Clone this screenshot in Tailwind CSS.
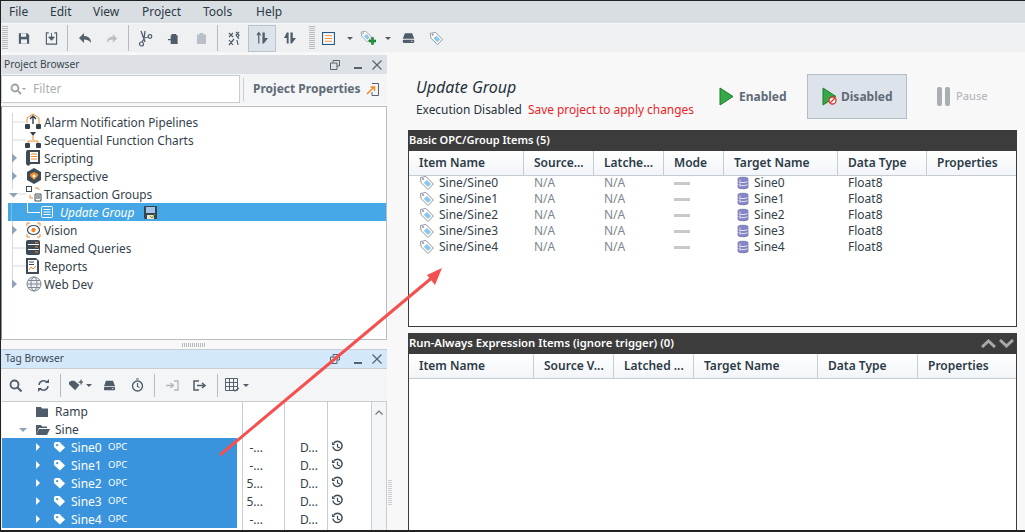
<!DOCTYPE html>
<html lang="en">
<head>
<meta charset="UTF-8">
<title>Update Group</title>
<script src="https://cdn.jsdelivr.net/npm/@tailwindcss/browser@4"></script>
</head>
<body class="font-['Noto_Sans',sans-serif] text-[12px] text-[#2c3a47] bg-[#f8f8f8] overflow-hidden">
<svg width="0" height="0" class="absolute">
  <symbol id="tagblue" viewBox="0 0 16 16"><path d="M1.5 2.5 7 1.5l7.5 7.5-5.5 5.5L2 7.5z" fill="#fff" stroke="#8b959e"/><path d="M6 6.5 8 5l4 4-3 3-4-4z" fill="#8cc6ea"/><circle cx="4" cy="4" r="1" fill="#8b959e"/></symbol>
  <symbol id="db" viewBox="0 0 12 14"><path d="M1 2.5C1 .8 11 .8 11 2.500V11.500C11 13.200 1 13.200 1 11.500z" fill="#8486c6"/><path d="M1 5.500c2 1.400 8 1.400 10 0M1 8.500c2 1.400 8 1.400 10 0" stroke="#e2e3f3" fill="none"/><path d="M3 3v8" stroke="#c5c6e6"/><path d="M1 2.500C1 .8 11 .8 11 2.500V11.500C11 13.200 1 13.200 1 11.500z" fill="none" stroke="#5c5e9c" stroke-width=".6"/></symbol>
  <symbol id="tagw" viewBox="0 0 14 14"><path d="M1 2.500 2.500 1H7l6 6-5.500 5.500-6.500-6z" fill="#fff"/><circle cx="4.500" cy="4.500" r="1.200" fill="#3a94dd"/></symbol>
  <symbol id="hist" viewBox="0 0 14 14"><path d="M3 3.200A5 5 0 1 1 2 7" fill="none" stroke="#3d4a57" stroke-width="1.500"/><path d="M1 2v3.500h3.500z" fill="#3d4a57"/><path d="M7 4v3.500l2.500 1" fill="none" stroke="#3d4a57" stroke-width="1.300"/></symbol>
  <symbol id="drive" viewBox="0 0 16 14"><path d="M3.500 1h9l2.500 7H1z" fill="#4f5d6b"/><rect x="1" y="9" width="14" height="4" rx="1" fill="#4f5d6b"/><rect x="11" y="10.500" width="2" height="1" fill="#fff"/></symbol>
</svg>

<div class="h-[532px] w-[1025px] flex flex-col border-t border-l border-[#222]">
  <!-- menu -->
  <div class="h-[22px] mb-[1px] shrink-0 bg-[#d9dee2] flex items-center text-[12px] text-[#2c3a47]">
    <span class="ml-2 w-[41px]">File</span><span class="w-[43px]">Edit</span><span class="w-[49px]">View</span><span class="w-[61px]">Project</span><span class="w-[53px]">Tools</span><span>Help</span>
  </div>
  <!-- toolbar -->
  <div class="h-[28px] shrink-0 bg-[#eef0f2] flex items-center">
    <div class="w-[6px] h-[24px] ml-[1px] mr-[9px] bg-[repeating-linear-gradient(to_bottom,#b5bbc1_0,#b5bbc1_1px,transparent_1px,transparent_2px)]"></div>
    <svg class="w-[12px] h-[13px] ml-[1px] mr-[15px]" viewBox="0 0 14 14"><path d="M1 1h10l2 2v10H1z" fill="#4f5d6b"/><rect x="3.500" y="1" width="6" height="4" fill="#eef0f2"/><rect x="3.500" y="8" width="7" height="5" fill="#eef0f2"/></svg>
    <svg class="w-[13px] h-[13px] mr-[9px]" viewBox="0 0 14 14"><path d="M4 1H1.500v12h11V1H10" fill="none" stroke="#4f5d6b" stroke-width="1.200"/><path d="M7 1v6M4 5.500h6L7 9z" fill="#4f5d6b" stroke="#4f5d6b"/></svg>
    <div class="w-px h-[26px] bg-[#b5bbc1] mr-[10px]"></div>
    <svg class="w-[14px] h-[12px] mr-[14px]" viewBox="0 0 14 12"><path d="M6 1v3c4 0 7 2 7 7-2-3-4-3.500-7-3.500V11L1 6z" fill="#54616e"/></svg>
    <svg class="w-[12px] h-[11px] mr-[10px]" viewBox="0 0 14 12"><path d="M8 1v3C4 4 1 6 1 11c2-3 4-3.500 7-3.500V11l5-5z" fill="#b9c0c7"/></svg>
    <div class="w-px h-[26px] bg-[#b5bbc1] mr-[8px]"></div>
    <svg class="w-[16px] h-[17px] mr-[14px]" viewBox="0 0 16 17"><path d="M4 1l3 8 1 3M8 1 7 9l-2 3" stroke="#4f5d6b" fill="none" stroke-width="1.300"/><circle cx="4.500" cy="14" r="2" fill="none" stroke="#4f5d6b" stroke-width="1.200"/><circle cx="13" cy="6.500" r="1.800" fill="none" stroke="#4f5d6b" stroke-width="1.200"/><path d="M8 8l3-1" stroke="#4f5d6b"/></svg>
    <svg class="w-[12px] h-[13px] mr-[18px]" viewBox="0 0 13 13"><path d="M5 1.500h5V3h1.500v9.500H4v-4H1V7h3V3h1z" fill="#4f5d6b"/></svg>
    <svg class="w-[9px] h-[11px] mr-[11px]" viewBox="0 0 10 12"><path d="M3 0h4v1.500h3V12H0V1.500h3z" fill="#b9c0c7"/></svg>
    <div class="w-px h-[26px] bg-[#b5bbc1] mr-[9px]"></div>
    <svg class="w-[14px] h-[15px] mr-[7px]" viewBox="0 0 14 15"><path d="M2 2l4 4M6 2 2 6M9 1l3 3-1 2M12 1 9 4l3 4M2 9l4 5M7 8l-5 6M10 9l1 5" stroke="#4f5d6b" fill="none" stroke-width="1.200"/></svg>
    <div class="w-[28px] h-[27px] bg-[#dce3ea] border border-[#b9c3cc] flex items-center justify-center mr-[8px]">
      <svg class="w-[12px] h-[14px]" viewBox="0 0 13 14"><path d="M3 1v12M1 4l2-3 2 3" stroke="#4f5d6b" fill="none" stroke-width="1.300"/><path d="M7 1h2.500v6H13L8.500 13H7z" fill="#4f5d6b"/></svg>
    </div>
    <svg class="w-[12px] h-[14px] mr-[13px]" viewBox="0 0 13 14"><path d="M0 7 3 1h2v12H3V7zM7 1h2.500v6H13L8.500 13H7z" fill="#4f5d6b"/></svg>
    <div class="w-[6px] h-[24px] mr-[7px] bg-[repeating-linear-gradient(to_bottom,#b5bbc1_0,#b5bbc1_1px,transparent_1px,transparent_2px)]"></div>
    <svg class="w-[13px] h-[13px] mr-[12px]" viewBox="0 0 14 14"><rect x=".6" y=".6" width="12.800" height="12.800" fill="#fff" stroke="#1f5e8c" stroke-width="1.200"/><path d="M3 4h8M3 7h8M3 10h8" stroke="#e9872d"/></svg>
    <div class="w-0 h-0 border-x-[3px] border-x-transparent border-t-[3px] border-t-[#4f5d6b] mr-[7px]"></div>
    <svg class="w-[16px] h-[16px] mr-[9px]" viewBox="0 0 16 16"><use href="#tagblue" width="13" height="13"/><path d="M9 10h2.500V7.500h2V10H16v2h-2.500v2.500h-2V12H9z" fill="#1e9e3a" stroke="#0b5d1d" stroke-width=".5"/></svg>
    <div class="w-0 h-0 border-x-[3px] border-x-transparent border-t-[3px] border-t-[#4f5d6b] mr-[11px]"></div>
    <svg class="w-[13px] h-[12px] mr-[14px]" viewBox="0 0 16 14"><use href="#drive"/></svg>
    <svg class="w-[15px] h-[15px]" viewBox="0 0 16 16"><use href="#tagblue"/></svg>
  </div>

  <div class="flex-1 min-h-0 flex">
    <!-- left column -->
    <div class="w-[386px] shrink-0 flex flex-col pt-[3px]">
      <div class="h-[19px] shrink-0 bg-[#dde1e5] flex items-center px-[3px] text-[10.200px] text-[#3a4651]">
        <span class="flex-1">Project Browser</span>
        <svg class="w-[10px] h-[10px] mr-[14px]" viewBox="0 0 10 10"><path d="M3 2.500V.5h6.500V6H7M.5 3h6.500v6.500H.5z" fill="none" stroke="#56636f"/></svg>
        <div class="w-[8px] h-[2px] bg-[#56636f] mt-[7px] mr-[10px]"></div>
        <svg class="w-[10px] h-[10px] mr-[2px]" viewBox="0 0 10 10"><path d="M.5.5l9 9M9.500.5l-9 9" stroke="#56636f" stroke-width="1.200"/></svg>
      </div>
      <div class="h-[30px] shrink-0 bg-[#f4f5f6] flex items-center">
        <div class="w-[239px] h-[28px] bg-white border border-[#c8cdd2] flex items-center px-[8px] text-[#a9aeb3]">
          <svg class="w-[16px] h-[12px] mr-[7px]" viewBox="0 0 16 12"><circle cx="5" cy="5" r="3.500" fill="none" stroke="#9aa0a6" stroke-width="1.800"/><path d="M8 8l3 3" stroke="#9aa0a6" stroke-width="1.800"/><path d="M12 5h4l-2 2z" fill="#9aa0a6"/></svg>
          Filter
        </div>
        <div class="w-px h-[23px] bg-[#c8cdd2] ml-[3px]"></div>
        <span class="ml-[9px] font-bold text-[#5f6b76]">Project Properties</span>
        <svg class="w-[13px] h-[13px] ml-[5px]" viewBox="0 0 13 13"><path d="M6 .5h6.500v12H6V9" fill="none" stroke="#56636f"/><path d="M1 11l7-7M4.500 4H8.500V8" stroke="#ee8a2b" fill="none" stroke-width="1.500"/></svg>
      </div>
      <!-- project tree -->
      <div class="h-[234px] shrink-0 mt-[2px] bg-white border border-[#b9bec3] border-l-[#8a8f94] pt-[6px] text-[11.850px] leading-[18px] text-[#333f4a]">
        <div class="flex h-[18px]"><svg class="w-[42px] h-[18px] shrink-0" viewBox="0 0 42 18"><path d="M10.500 0v18M10.500 9H24" stroke="#d5d8db"/><path d="M25 10V5l6-4 6 4v6" fill="#fff" stroke="#ee8a2b"/><path d="M31 11V4M28 6l3-3 3 3" stroke="#333f4a" fill="none" stroke-width="1.400"/><rect x="23" y="11" width="5" height="5" rx="1" fill="#333f4a"/><rect x="34" y="11" width="5" height="5" rx="1" fill="#333f4a"/></svg><span>Alarm Notification Pipelines</span></div>
        <div class="flex h-[18px]"><svg class="w-[42px] h-[18px] shrink-0" viewBox="0 0 42 18"><path d="M10.500 0v18M10.500 9H24" stroke="#d5d8db"/><path d="M28 1h6l-3 4z" fill="#333f4a"/><path d="M31 5v4M26 13v-3h10v3" stroke="#ee8a2b" fill="none"/><rect x="23" y="12" width="5" height="5" rx="1" fill="#333f4a"/><rect x="34" y="12" width="5" height="5" rx="1" fill="#333f4a"/></svg><span>Sequential Function Charts</span></div>
        <div class="flex h-[18px]"><svg class="w-[42px] h-[18px] shrink-0" viewBox="0 0 42 18"><path d="M10.500 0v18" stroke="#d5d8db"/><path d="M10 4.500l5 4.500-5 4.500z" fill="#8ea3b8"/><path d="M25 1h13v14h-9l-3 2-2-2V3z" fill="#3d4a57"/><path d="M28 3h8v10h-8z" fill="#fff"/><path d="M29 5h6M29 7.500h6M29 10h6" stroke="#ee8a2b"/></svg><span>Scripting</span></div>
        <div class="flex h-[18px]"><svg class="w-[42px] h-[18px] shrink-0" viewBox="0 0 42 18"><path d="M10.500 0v18" stroke="#d5d8db"/><path d="M10 4.500l5 4.500-5 4.500z" fill="#8ea3b8"/><path d="M32 1l7 4v8l-7 4-7-4V5z" fill="#3d4a57"/><path d="M28 7l4-2 4 2v2l-4 4-4-4z" fill="#ee8a2b"/><circle cx="32" cy="9" r="1.500" fill="#fff"/></svg><span>Perspective</span></div>
        <div class="flex h-[18px]"><svg class="w-[42px] h-[18px] shrink-0" viewBox="0 0 42 18"><path d="M10.500 0v5" stroke="#d5d8db"/><path d="M7 8h9l-4.500 4.500z" fill="#8ea3b8"/><path d="M16 9h8" stroke="#d5d8db"/><rect x="24.500" y="1.500" width="5" height="5" fill="#fff" stroke="#3d4a57"/><path d="M33 3h3l1 2M28 10v3h3" stroke="#ee8a2b" fill="none"/><path d="M33 9h6v7h-6z" fill="#fff" stroke="#3d4a57"/><path d="M34 11h4M34 13h4" stroke="#3d4a57"/></svg><span>Transaction Groups</span></div>
        <div class="flex h-[18px] ml-[6px] bg-[#45a7e6] text-white italic"><svg class="w-[52px] h-[18px] shrink-0" viewBox="0 0 52 18"><path d="M19.500 0v9.500H32" stroke="#fff" fill="none"/><path d="M3.500 0v18" stroke="#d5d8db" opacity=".4"/><rect x="33.500" y="3.500" width="11" height="11" rx="1" fill="none" stroke="#fff"/><path d="M35.500 6.500h7M35.500 9h7M35.500 11.500h7" stroke="#fff"/></svg><span class="w-[84px]">Update Group</span><svg class="w-[13px] h-[13px] mt-[3px]" viewBox="0 0 13 13"><rect width="13" height="13" rx="1" fill="#39434d"/><rect x="2" y="1" width="9" height="6" fill="#9fc6e8"/><rect x="3" y="9" width="7" height="4" fill="#e8e8d8"/><path d="M6 10l2 2 3-4" stroke="#7a8c2c" fill="none"/></svg></div>
        <div class="flex h-[18px]"><svg class="w-[42px] h-[18px] shrink-0" viewBox="0 0 42 18"><path d="M10.500 0v18" stroke="#d5d8db"/><path d="M10 4.500l5 4.500-5 4.500z" fill="#8ea3b8"/><path d="M25 5V2h3M35 2h3v3M38 13v3h-3M28 16h-3v-3" fill="none" stroke="#ee8a2b"/><ellipse cx="31.500" cy="9" rx="6" ry="4.500" fill="#fff" stroke="#3d4a57" stroke-width="1.200"/><circle cx="31.500" cy="9" r="2.200" fill="#ee8a2b"/></svg><span>Vision</span></div>
        <div class="flex h-[18px]"><svg class="w-[42px] h-[18px] shrink-0" viewBox="0 0 42 18"><path d="M10.500 0v18M10.500 9H24" stroke="#d5d8db"/><rect x="24" y="1" width="14" height="15" rx="2" fill="#3d4a57"/><path d="M26 5.500h11M26 10.500h11" stroke="#fff"/><path d="M33 3.500h3M33 8h3M33 13h3" stroke="#ee8a2b"/></svg><span>Named Queries</span></div>
        <div class="flex h-[18px]"><svg class="w-[42px] h-[18px] shrink-0" viewBox="0 0 42 18"><path d="M10.500 0v18M10.500 9H24" stroke="#d5d8db"/><path d="M24 1h10l3 3v13H24z" fill="#3d4a57"/><rect x="26" y="3" width="9" height="12" fill="#fff"/><path d="M27 5h5M27 7.500h5" stroke="#3d4a57"/><path d="M27 13l2-3 2 2 3-3" stroke="#ee8a2b" fill="none"/></svg><span>Reports</span></div>
        <div class="flex h-[18px]"><svg class="w-[42px] h-[18px] shrink-0" viewBox="0 0 42 18"><path d="M10.500 0v9" stroke="#d5d8db"/><path d="M10 4.500l5 4.500-5 4.500z" fill="#8ea3b8"/><circle cx="32" cy="9" r="7" fill="#eef0f2" stroke="#7e8a95"/><ellipse cx="32" cy="9" rx="3" ry="7" fill="none" stroke="#7e8a95"/><path d="M25 9h14M26 5.500h12M26 12.500h12" stroke="#7e8a95"/></svg><span>Web Dev</span></div>
      </div>
      <!-- splitter -->
      <div class="h-[9px] shrink-0 flex items-center justify-center">
        <div class="w-[24px] h-[4px] bg-[repeating-linear-gradient(to_right,#b5bbc1_0,#b5bbc1_1px,transparent_1px,transparent_2px)]"></div>
      </div>
      <!-- tag browser -->
      <div class="h-[20px] shrink-0 bg-[#d3e9fb] border-y border-[#c8cdd2] flex items-center pl-[4px] pr-[3px] text-[10.200px] text-[#3a4651]">
        <span class="flex-1">Tag Browser</span>
        <svg class="w-[10px] h-[10px] mr-[14px]" viewBox="0 0 10 10"><path d="M3 2.500V.5h6.500V6H7M.5 3h6.500v6.500H.5z" fill="none" stroke="#56636f"/></svg>
        <div class="w-[8px] h-[2px] bg-[#56636f] mt-[7px] mr-[10px]"></div>
        <svg class="w-[10px] h-[10px] mr-[2px]" viewBox="0 0 10 10"><path d="M.5.5l9 9M9.500.5l-9 9" stroke="#56636f" stroke-width="1.200"/></svg>
      </div>
      <div class="h-[32px] shrink-0 bg-[#f4f5f6] flex items-center pl-[8px]">
        <svg class="w-[13px] h-[13px] mr-[15px]" viewBox="0 0 13 13"><circle cx="5.500" cy="5.500" r="4" fill="none" stroke="#4f5d6b" stroke-width="1.800"/><path d="M8.500 8.500l4 4" stroke="#4f5d6b" stroke-width="2"/></svg>
        <svg class="w-[13px] h-[13px] mr-[10px]" viewBox="0 0 13 13"><path d="M2 6a4.500 4.500 0 0 1 8-2.500M11 7a4.500 4.500 0 0 1-8 2.500" fill="none" stroke="#4f5d6b" stroke-width="1.500"/><path d="M8 4h4V0zM5 9H1v4z" fill="#4f5d6b"/></svg>
        <div class="w-px h-[23px] bg-[#b5bbc1] mr-[8px]"></div>
        <svg class="w-[14px] h-[14px] mr-[3px]" viewBox="0 0 16 14"><path d="M0 3.500 3 2h3l6 5-5 6-7-7z" fill="#4f5d6b"/><path d="M11 3h2V1h1.500v2h1.500v1.500h-1.500V6.500H13V4.500h-2z" fill="#4f5d6b"/></svg>
        <div class="w-0 h-0 border-x-[3px] border-x-transparent border-t-[3px] border-t-[#4f5d6b] mr-[11px]"></div>
        <svg class="w-[13px] h-[11px] mr-[15px]" viewBox="0 0 16 14"><use href="#drive"/></svg>
        <svg class="w-[13px] h-[14px] mr-[10px]" viewBox="0 0 13 14"><circle cx="6.500" cy="8" r="5" fill="none" stroke="#4f5d6b" stroke-width="1.400"/><path d="M6.500 5v3.500l2 1M5 1h3" stroke="#4f5d6b" fill="none" stroke-width="1.200"/></svg>
        <div class="w-px h-[23px] bg-[#b5bbc1] mr-[11px]"></div>
        <svg class="w-[13px] h-[11px] mr-[14px]" viewBox="0 0 13 11"><path d="M8 1h4v9H8M0 5.500h7M4.500 3 7.500 5.500 4.500 8" fill="none" stroke="#b0b6bc" stroke-width="1.300"/></svg>
        <svg class="w-[13px] h-[11px] mr-[11px]" viewBox="0 0 13 11"><path d="M6 1H1v9h5M4 5.500h7M9 3l3 2.500L9 8" fill="none" stroke="#4f5d6b" stroke-width="1.500"/></svg>
        <div class="w-px h-[23px] bg-[#b5bbc1] mr-[7px]"></div>
        <svg class="w-[15px] h-[14px] mr-[3px]" viewBox="0 0 15 14"><path d="M.5.500h12v12H.5zM.5 4.500h12M.5 8.500h12M4.500.5v12M8.500.5v12" fill="none" stroke="#56636f"/><path d="M8 11l2 2 4-3" fill="none" stroke="#56636f" stroke-width="1.200"/></svg>
        <div class="w-0 h-0 border-x-[3px] border-x-transparent border-t-[3px] border-t-[#4f5d6b]"></div>
      </div>
      <div class="flex-1 min-h-0 flex ml-[1px] bg-white border-t border-[#c8cdd2] text-[#333f4a] leading-[18px]">
        <div class="w-[241px] shrink-0 border-r border-[#c8cdd2]">
          <div class="flex items-center h-[18px] pl-[33px] pt-[2px]"><svg class="w-[14px] h-[12px] mr-[6px]" viewBox="0 0 14 12"><path d="M1 1h5l1 1.500h6V11H1z" fill="#4f5d6b"/></svg>Ramp</div>
          <div class="flex items-center h-[18px] pl-[17px] pt-[2px]"><div class="w-0 h-0 border-x-[4px] border-x-transparent border-t-[4px] border-t-[#8ea3b8] mr-[8px]"></div><svg class="w-[15px] h-[12px] mr-[5px]" viewBox="0 0 15 12"><path d="M1 11V1h5l1 1.500h5V4H4z" fill="#4f5d6b"/><path d="M1 11l3-6h11l-3 6z" fill="#4f5d6b"/></svg>Sine</div>
          <div class="mr-[5px] bg-[#3a94dd] text-white">
            <div class="flex items-center h-[18px] pl-[34px]"><div class="w-0 h-0 border-y-[4px] border-y-transparent border-l-[4px] border-l-white mr-[13px]"></div><svg class="w-[13px] h-[13px] mr-[5px]"><use href="#tagw"/></svg><span class="w-[37px] mt-[2px]">Sine0</span><span class="text-[9.500px] -mt-[1px]">OPC</span></div>
            <div class="flex items-center h-[18px] pl-[34px]"><div class="w-0 h-0 border-y-[4px] border-y-transparent border-l-[4px] border-l-white mr-[13px]"></div><svg class="w-[13px] h-[13px] mr-[5px]"><use href="#tagw"/></svg><span class="w-[37px] mt-[2px]">Sine1</span><span class="text-[9.500px] -mt-[1px]">OPC</span></div>
            <div class="flex items-center h-[18px] pl-[34px]"><div class="w-0 h-0 border-y-[4px] border-y-transparent border-l-[4px] border-l-white mr-[13px]"></div><svg class="w-[13px] h-[13px] mr-[5px]"><use href="#tagw"/></svg><span class="w-[37px] mt-[2px]">Sine2</span><span class="text-[9.500px] -mt-[1px]">OPC</span></div>
            <div class="flex items-center h-[18px] pl-[34px]"><div class="w-0 h-0 border-y-[4px] border-y-transparent border-l-[4px] border-l-white mr-[13px]"></div><svg class="w-[13px] h-[13px] mr-[5px]"><use href="#tagw"/></svg><span class="w-[37px] mt-[2px]">Sine3</span><span class="text-[9.500px] -mt-[1px]">OPC</span></div>
            <div class="flex items-center h-[18px] pl-[34px]"><div class="w-0 h-0 border-y-[4px] border-y-transparent border-l-[4px] border-l-white mr-[13px]"></div><svg class="w-[13px] h-[13px] mr-[5px]"><use href="#tagw"/></svg><span class="w-[37px] mt-[2px]">Sine4</span><span class="text-[9.500px] -mt-[1px]">OPC</span></div>
          </div>
        </div>
        <div class="w-[42px] shrink-0 border-r border-[#c8cdd2] pt-[37px] text-right pr-[21px]"><div>-...</div><div>-...</div><div>5...</div><div>5...</div><div>-...</div></div>
        <div class="w-[43px] shrink-0 border-r border-[#c8cdd2] pt-[37px] pl-[15px]"><div>D...</div><div>D...</div><div>D...</div><div>D...</div><div>D...</div></div>
        <div class="w-[44px] shrink-0 border-r border-[#c8cdd2] pt-[38px] pl-[3px]">
          <svg class="w-[13px] h-[13px] mb-[5px]"><use href="#hist"/></svg>
          <svg class="w-[13px] h-[13px] mb-[5px]"><use href="#hist"/></svg>
          <svg class="w-[13px] h-[13px] mb-[5px]"><use href="#hist"/></svg>
          <svg class="w-[13px] h-[13px] mb-[5px]"><use href="#hist"/></svg>
          <svg class="w-[13px] h-[13px]"><use href="#hist"/></svg>
        </div>
        <div class="flex-1 bg-[#f4f5f6] border-r border-[#c8cdd2] flex justify-center pt-[8px]">
          <svg class="w-[8px] h-[5px]" viewBox="0 0 8 5"><path d="M.5 4.500 4 1l3.500 3.500" fill="none" stroke="#6a7681" stroke-width="1.200"/></svg>
        </div>
      </div>
    </div>

    <!-- right column -->
    <div class="flex-1 min-w-0 flex flex-col pl-[22px] pr-[7px] pt-[23px] relative">
      <div class="h-[55px] shrink-0 flex">
        <div class="w-[297px]">
          <div class="italic text-[16px] leading-[22px] text-[#26323d] mt-[1px] ml-[7px]">Update Group</div>
          <div class="leading-[17px] mt-[3px] ml-[7px] text-[11.900px] text-[#26323d]">Execution Disabled<span class="text-[#ee1c25] ml-[6px]">Save project to apply changes</span></div>
        </div>
        <div class="flex items-start -mt-[1px]">
          <div class="w-[101px] h-[45px] flex items-center pl-[13px] font-bold text-[#5f6b76]">
            <svg class="w-[15px] h-[19px] mr-[5px]" viewBox="0 0 15 19"><path d="M1 1l13 8.500L1 18z" fill="#36a847" stroke="#1d7a2c"/></svg>Enabled
          </div>
          <div class="w-[100px] h-[45px] bg-[#dce3ea] border border-[#b4bdc6] flex items-center pl-[14px] font-bold text-[#5f6b76]">
            <svg class="w-[15px] h-[19px] mr-[4px]" viewBox="0 0 15 19"><path d="M1 1l13 8.500L1 18z" fill="#36a847" stroke="#1d7a2c"/><circle cx="10.500" cy="13.500" r="3.500" fill="#fff" stroke="#d9352b" stroke-width="1.300"/><path d="M8 16l5-5" stroke="#d9352b" stroke-width="1.300"/></svg>Disabled
          </div>
          <div class="h-[45px] flex items-center pl-[30px] text-[11px] font-medium text-[#b4b9be]">
            <div class="w-[5px] h-[19px] rounded-[2px] bg-[#a9aeb3] mr-[3px]"></div><div class="w-[5px] h-[19px] rounded-[2px] bg-[#a9aeb3] mr-[6px]"></div>Pause
          </div>
        </div>
      </div>
      <!-- basic table -->
      <div class="h-[197px] shrink-0 flex flex-col border border-[#3c3c3c] bg-white -ml-[1px] w-[609px]">
        <div class="h-[20px] shrink-0 bg-[#3c3c3c] text-white text-[11px] font-semibold flex items-center pb-[2px]">Basic OPC/Group Items (5)</div>
        <div class="h-[25px] shrink-0 flex font-semibold text-[#2c3a47] bg-gradient-to-b from-white to-[#f2f5f8] border-b border-[#c5ccd3] items-center">
          <div class="w-[115px] h-full pl-[10px] flex items-center border-r border-[#c5ccd3]">Item Name</div>
          <div class="w-[70px] h-full pl-[10px] flex items-center border-r border-[#c5ccd3]">Source...</div>
          <div class="w-[70px] h-full pl-[10px] flex items-center border-r border-[#c5ccd3]">Latche...</div>
          <div class="w-[60px] h-full pl-[10px] flex items-center border-r border-[#c5ccd3]">Mode</div>
          <div class="w-[114px] h-full pl-[10px] flex items-center border-r border-[#c5ccd3]">Target Name</div>
          <div class="w-[89px] h-full pl-[10px] flex items-center border-r border-[#c5ccd3]">Data Type</div>
          <div class="flex-1 h-full pl-[10px] flex items-center">Properties</div>
        </div>
        <div class="-mt-[1px] leading-[16px] text-[#333f4a]">
          <div class="flex h-[16px]"><div class="w-[115px] pl-[10px] flex items-center"><svg class="w-[16px] h-[16px] mr-[4px]"><use href="#tagblue"/></svg>Sine/Sine0</div><div class="w-[70px] pl-[10px] text-[#7d8790]">N/A</div><div class="w-[70px] pl-[10px] text-[#7d8790]">N/A</div><div class="w-[60px] pl-[10px] flex items-center"><div class="w-[16px] h-[3px] bg-[#c6c9cc]"></div></div><div class="w-[114px] pl-[13px] flex items-center"><svg class="w-[12px] h-[14px] mr-[5px]" viewBox="0 0 12 14"><use href="#db"/></svg>Sine0</div><div class="w-[89px] pl-[10px]">Float8</div></div>
          <div class="flex h-[16px]"><div class="w-[115px] pl-[10px] flex items-center"><svg class="w-[16px] h-[16px] mr-[4px]"><use href="#tagblue"/></svg>Sine/Sine1</div><div class="w-[70px] pl-[10px] text-[#7d8790]">N/A</div><div class="w-[70px] pl-[10px] text-[#7d8790]">N/A</div><div class="w-[60px] pl-[10px] flex items-center"><div class="w-[16px] h-[3px] bg-[#c6c9cc]"></div></div><div class="w-[114px] pl-[13px] flex items-center"><svg class="w-[12px] h-[14px] mr-[5px]" viewBox="0 0 12 14"><use href="#db"/></svg>Sine1</div><div class="w-[89px] pl-[10px]">Float8</div></div>
          <div class="flex h-[16px]"><div class="w-[115px] pl-[10px] flex items-center"><svg class="w-[16px] h-[16px] mr-[4px]"><use href="#tagblue"/></svg>Sine/Sine2</div><div class="w-[70px] pl-[10px] text-[#7d8790]">N/A</div><div class="w-[70px] pl-[10px] text-[#7d8790]">N/A</div><div class="w-[60px] pl-[10px] flex items-center"><div class="w-[16px] h-[3px] bg-[#c6c9cc]"></div></div><div class="w-[114px] pl-[13px] flex items-center"><svg class="w-[12px] h-[14px] mr-[5px]" viewBox="0 0 12 14"><use href="#db"/></svg>Sine2</div><div class="w-[89px] pl-[10px]">Float8</div></div>
          <div class="flex h-[16px]"><div class="w-[115px] pl-[10px] flex items-center"><svg class="w-[16px] h-[16px] mr-[4px]"><use href="#tagblue"/></svg>Sine/Sine3</div><div class="w-[70px] pl-[10px] text-[#7d8790]">N/A</div><div class="w-[70px] pl-[10px] text-[#7d8790]">N/A</div><div class="w-[60px] pl-[10px] flex items-center"><div class="w-[16px] h-[3px] bg-[#c6c9cc]"></div></div><div class="w-[114px] pl-[13px] flex items-center"><svg class="w-[12px] h-[14px] mr-[5px]" viewBox="0 0 12 14"><use href="#db"/></svg>Sine3</div><div class="w-[89px] pl-[10px]">Float8</div></div>
          <div class="flex h-[16px]"><div class="w-[115px] pl-[10px] flex items-center"><svg class="w-[16px] h-[16px] mr-[4px]"><use href="#tagblue"/></svg>Sine/Sine4</div><div class="w-[70px] pl-[10px] text-[#7d8790]">N/A</div><div class="w-[70px] pl-[10px] text-[#7d8790]">N/A</div><div class="w-[60px] pl-[10px] flex items-center"><div class="w-[16px] h-[3px] bg-[#c6c9cc]"></div></div><div class="w-[114px] pl-[13px] flex items-center"><svg class="w-[12px] h-[14px] mr-[5px]" viewBox="0 0 12 14"><use href="#db"/></svg>Sine4</div><div class="w-[89px] pl-[10px]">Float8</div></div>
        </div>
      </div>
      <!-- run-always table -->
      <div class="flex-1 min-h-0 mt-[6px] mb-[1px] flex flex-col border border-[#3c3c3c] bg-white -ml-[1px] w-[609px]">
        <div class="h-[20px] shrink-0 bg-[#3c3c3c] text-white text-[11.300px] font-semibold flex items-center justify-between pr-[2px] pb-[1px]">
          <span>Run-Always Expression Items (ignore trigger) (0)</span>
          <span class="flex gap-[3px]">
            <svg class="w-[15px] h-[9px]" viewBox="0 0 15 9"><path d="M1 8l6.500-6L14 8" fill="none" stroke="#a8a8a8" stroke-width="3"/></svg>
            <svg class="w-[15px] h-[9px]" viewBox="0 0 15 9"><path d="M1 1l6.500 6L14 1" fill="none" stroke="#a8a8a8" stroke-width="3"/></svg>
          </span>
        </div>
        <div class="h-[25px] shrink-0 flex font-semibold text-[#2c3a47] bg-gradient-to-b from-white to-[#f2f5f8] border-b border-[#c5ccd3] items-center">
          <div class="w-[125px] h-full pl-[10px] flex items-center border-r border-[#c5ccd3]">Item Name</div>
          <div class="w-[80px] h-full pl-[10px] flex items-center border-r border-[#c5ccd3]">Source V...</div>
          <div class="w-[80px] h-full pl-[10px] flex items-center border-r border-[#c5ccd3]">Latched ...</div>
          <div class="w-[124px] h-full pl-[10px] flex items-center border-r border-[#c5ccd3]">Target Name</div>
          <div class="w-[100px] h-full pl-[10px] flex items-center border-r border-[#c5ccd3]">Data Type</div>
          <div class="flex-1 h-full pl-[10px] flex items-center">Properties</div>
        </div>
      </div>
      <div class="absolute left-[1px] top-[428px] w-[4px] h-[26px] bg-[repeating-linear-gradient(to_bottom,#c8cdd2_0,#c8cdd2_1px,transparent_1px,transparent_2px)]"></div>
    </div>
  </div>
</div>
<!-- red annotation arrow over the screenshot -->
<svg class="absolute left-0 top-0 w-[1025px] h-[532px] pointer-events-none" viewBox="0 0 1025 532">
  <path d="M220 455 434 276" stroke="#f4504f" stroke-width="3" fill="none"/>
  <path d="M442 268 427 275 435 285z" fill="#f4504f"/>
</svg>
<div class="absolute left-0 top-[530px] w-[1025px] h-[2px] bg-[#222]"></div>
</body>
</html>
